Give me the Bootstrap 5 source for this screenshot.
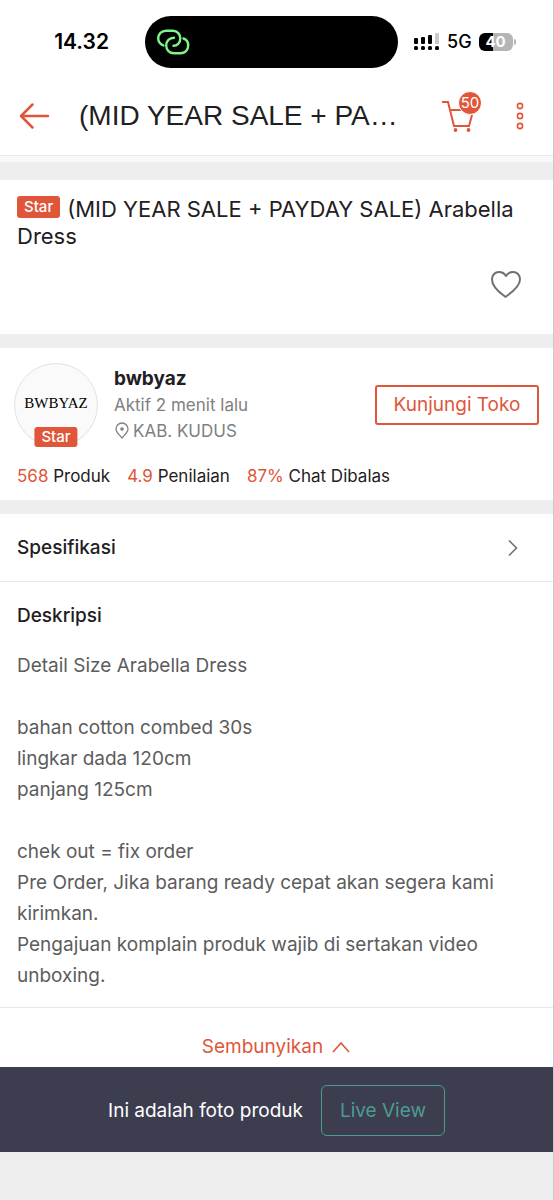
<!DOCTYPE html>
<html lang="id">
<head>
<meta charset="utf-8">
<meta name="viewport" content="width=device-width, initial-scale=1">
<title>Arabella Dress</title>
<link rel="stylesheet" href="https://cdn.jsdelivr.net/npm/bootstrap@5.3.0/dist/css/bootstrap.min.css">
<style>
  :root { --brand: #e0563a; --ink: #1f2022; --soft: #5c5c5c; --rule: #e8e8e8; }
  body { background: #eee; color: var(--ink); font-family: Inter, "Liberation Sans", sans-serif; font-size: 19px; line-height: 28px; }
  .screen { border-right: 1px solid #c8c8c8; min-height: 100vh; }
  svg { display: block; flex: none; }
  .brand-ink { color: var(--brand); }

  .status-bar { display: grid; grid-template-columns: 1fr 253px 1fr; height: 83px; padding: 16px 10px 0 0; }
  .status-bar > * { height: 52px; }
  .clock { font-size: 21px; font-weight: 600; color: #000; padding-right: 36px; }
  .island { background: #000; border-radius: 26px; padding-left: 11px; }
  .network { font-size: 18px; font-weight: 500; color: #000; padding-left: 16px; gap: 7px; }
  .battery { width: 34px; height: 18px; flex: none; border-radius: 6px; background: linear-gradient(90deg, #000 40%, #b5b5b5 40%); color: #fff; font-size: 15px; line-height: 18px; font-weight: 700; text-align: center; }
  .battery-tip { width: 2px; height: 6px; flex: none; border-radius: 0 2px 2px 0; background: #b5b5b5; margin-left: -6px; }

  .top-bar { height: 72px; padding: 0 29px 7px 19px; box-shadow: 0 1px 0 #eaeaea, 0 7px 0 #f8f8f8; }
  .top-title { font-family: "Liberation Sans", sans-serif; font-size: 28px; line-height: 36px; font-weight: 400; padding-left: 29px; }
  .bare { background: none; border: 0; padding: 0; color: var(--brand); }
  .cart { margin-right: 42px; }
  .cart-count { top: -9px; right: -8px; width: 24px; height: 24px; border-radius: 50%; border: 1px solid #fff; background: var(--brand); color: #fff; font-size: 15px; line-height: 22px; text-align: center; }

  .block { background: #fff; margin-bottom: 14px; }
  .star-tag { background: var(--brand); color: #fff; border-radius: 3px; font-size: 15px; font-weight: 500; line-height: 22px; padding: 0 7px; }
  .product { margin-top: 25px; padding: 16px 32px 35px 17px; }
  .product-name { font-size: 22px; line-height: 27px; font-weight: 400; }
  .product-name .star-tag { float: left; margin-right: 7px; }

  .shop { padding: 15px 14px 10px; }
  .logo-ring { width: 84px; height: 84px; border-radius: 50%; border: 1px solid #e2e2e2; background: #fafafa; }
  .logo-word { font-family: "Liberation Serif", serif; font-size: 15px; color: #000; line-height: 78px; text-align: center; }
  .logo-ring .star-tag { bottom: -1px; left: 50%; transform: translateX(-50%); line-height: 20px; }
  .shop-name { font-size: 19px; line-height: 26px; font-weight: 700; }
  .shop-meta { font-size: 17px; line-height: 26px; color: #808080; }
  .visit { width: 164px; height: 40px; border: 2px solid var(--brand); border-radius: 3px; font-size: 19px; }
  .facts { font-size: 17px; gap: 17px; padding: 15px 3px 0; }

  .spec { padding: 20px 34px 19px 17px; border-bottom: 1px solid var(--rule); }
  .section-name { font-size: 19px; line-height: 28px; font-weight: 500; }
  .about { padding: 20px 17px 16px; border-bottom: 1px solid var(--rule); }
  .about p { color: var(--soft); line-height: 31px; margin-bottom: 31px; }
  .about p:last-child { margin-bottom: 0; }
  .fold { padding: 25px 0 6px; }
  .live-bar { background: #3d3d50; color: #fff; padding: 18px 0 16px; gap: 18px; }
  .live { width: 124px; height: 51px; background: none; border: 1px solid #4b9c90; border-radius: 6px; color: #4b9c90; }
</style>
</head>
<body>
<div class="screen">
  <div class="status-bar bg-white">
    <div class="clock d-flex align-items-center justify-content-end">14.32</div>
    <div class="island d-flex align-items-center">
      <svg width="34" height="28" viewBox="0 0 34 28" fill="none" stroke="#7df58a" stroke-width="2.400" stroke-linecap="round"><path d="M7.500 17.500C4 16 2.200 13.500 2.200 10.500C2.200 6 5.500 2.800 10 2.800H17C21.500 2.800 24.300 6.500 24.300 10.500C24.300 15 21 17.800 17.500 17.800"/><path d="M27.500 10.500C30.500 11.500 32.200 14.500 32.200 17.500C32.200 22 29 25.200 24.500 25.200H18C13.500 25.200 10.200 22 10.200 17.500C10.200 13 13.500 9.800 18 9.800"/></svg>
    </div>
    <div class="network d-flex align-items-center">
      <svg width="26" height="18" viewBox="0 0 26 18"><g fill="#000"><rect y="5" width="4" height="6" rx="1"/><rect x="7" y="4" width="4" height="7" rx="1"/><rect x="14" y="2" width="4" height="9" rx="1"/><rect y="13" width="4" height="4" rx="1.500"/><rect x="7" y="13" width="4" height="4" rx="1.500"/><rect x="14" y="13" width="4" height="4" rx="1.500"/><rect x="21" y="13" width="4" height="4" rx="1.500"/></g><rect x="21" width="4" height="11" rx="1" fill="#c9c9c9"/></svg>
      <span>5G</span>
      <span class="battery">40</span><span class="battery-tip"></span>
    </div>
  </div>

  <header class="top-bar bg-white d-flex align-items-center">
    <button class="bare" aria-label="Kembali"><svg width="31" height="28" viewBox="0 0 31 28" fill="none" stroke="currentColor" stroke-width="2.500" stroke-linecap="round" stroke-linejoin="round"><path d="M29 14H2M13.500 2.500 2 14l11.500 11.500"/></svg></button>
    <h1 class="top-title flex-grow-1 mb-0 text-nowrap">(MID YEAR SALE + PA…</h1>
    <button class="bare cart position-relative" aria-label="Keranjang"><svg width="32" height="32" viewBox="0 0 32 32" fill="none" stroke="currentColor" stroke-width="2"><path d="M0 2H6L12 26H27L30 15M9 10H20"/><circle cx="13.500" cy="30" r="1.900" fill="currentColor" stroke="none"/><circle cx="26.500" cy="30" r="1.900" fill="currentColor" stroke="none"/></svg><span class="cart-count position-absolute">50</span></button>
    <button class="bare" aria-label="Menu"><svg width="8" height="28" viewBox="0 0 8 28" fill="none" stroke="currentColor" stroke-width="1.600"><circle cx="4" cy="4" r="2.600"/><circle cx="4" cy="14" r="2.600"/><circle cx="4" cy="24" r="2.600"/></svg></button>
  </header>

  <main>
    <section class="block product">
      <h2 class="product-name mb-0"><span class="star-tag">Star</span>(MID YEAR SALE + PAYDAY SALE) Arabella Dress</h2>
      <div class="d-flex justify-content-end pt-3">
        <button class="bare mt-1" aria-label="Favorit"><svg width="32" height="29" viewBox="0 0 32 29" fill="none" stroke="#707070" stroke-width="2" stroke-linejoin="round"><path d="M17 26.500Q16.500 27 16 26.500C11 23 3 16 3 9.500C3 5 6 2 10 2C13 2 15.500 3.500 17 6C18.500 3.500 21 2 24 2C28 2 31 5 31 9.500C31 16 22 23 17 26.500Z"/></svg></button>
      </div>
    </section>

    <section class="block shop">
      <div class="d-flex align-items-center">
        <div class="logo-ring position-relative"><div class="logo-word">BWBYAZ</div><span class="star-tag position-absolute">Star</span></div>
        <div class="flex-grow-1 ps-3">
          <div class="shop-name">bwbyaz</div>
          <div class="shop-meta">Aktif 2 menit lalu</div>
          <div class="shop-meta d-flex align-items-center"><svg width="19" height="18" viewBox="0 0 19 18" fill="none" stroke="currentColor" stroke-width="1.300"><path d="M8 16C5 12.500 2 10 2 7A6 6 0 0 1 14 7C14 10 11 12.500 8 16Z"/><circle cx="8" cy="7" r="1.800" fill="currentColor" stroke="none"/></svg>KAB. KUDUS</div>
        </div>
        <button class="bare visit">Kunjungi Toko</button>
      </div>
      <div class="facts d-flex">
        <span><span class="brand-ink">568</span> Produk</span>
        <span><span class="brand-ink">4.9</span> Penilaian</span>
        <span><span class="brand-ink">87%</span> Chat Dibalas</span>
      </div>
    </section>

    <section class="bg-white">
      <a href="#spesifikasi" class="spec d-flex justify-content-between align-items-center text-reset text-decoration-none">
        <span class="section-name">Spesifikasi</span>
        <svg width="12" height="18" viewBox="0 0 12 18" fill="none" stroke="#707070" stroke-width="1.600"><path d="M2 1.500 9.500 9 2 16.500"/></svg>
      </a>
      <div class="about">
        <h3 class="section-name mb-3 pb-1">Deskripsi</h3>
        <p>Detail Size Arabella Dress</p>
        <p>bahan cotton combed 30s<br>lingkar dada 120cm<br>panjang 125cm</p>
        <p>chek out = fix order<br>Pre Order, Jika barang ready cepat akan segera kami kirimkan.<br>Pengajuan komplain produk wajib di sertakan video unboxing.</p>
      </div>
      <div class="fold d-flex justify-content-center">
        <button class="bare d-flex align-items-center gap-2">Sembunyikan <svg width="20" height="12" viewBox="0 0 20 12" fill="none" stroke="currentColor" stroke-width="1.600"><path d="M2 11 10 2l8 9"/></svg></button>
      </div>
    </section>
  </main>

  <footer class="live-bar d-flex justify-content-center align-items-center">
    <span>Ini adalah foto produk</span>
    <button class="live">Live View</button>
  </footer>
</div>
<script src="https://cdn.jsdelivr.net/npm/bootstrap@5.3.0/dist/js/bootstrap.bundle.min.js"></script>
</body>
</html>
